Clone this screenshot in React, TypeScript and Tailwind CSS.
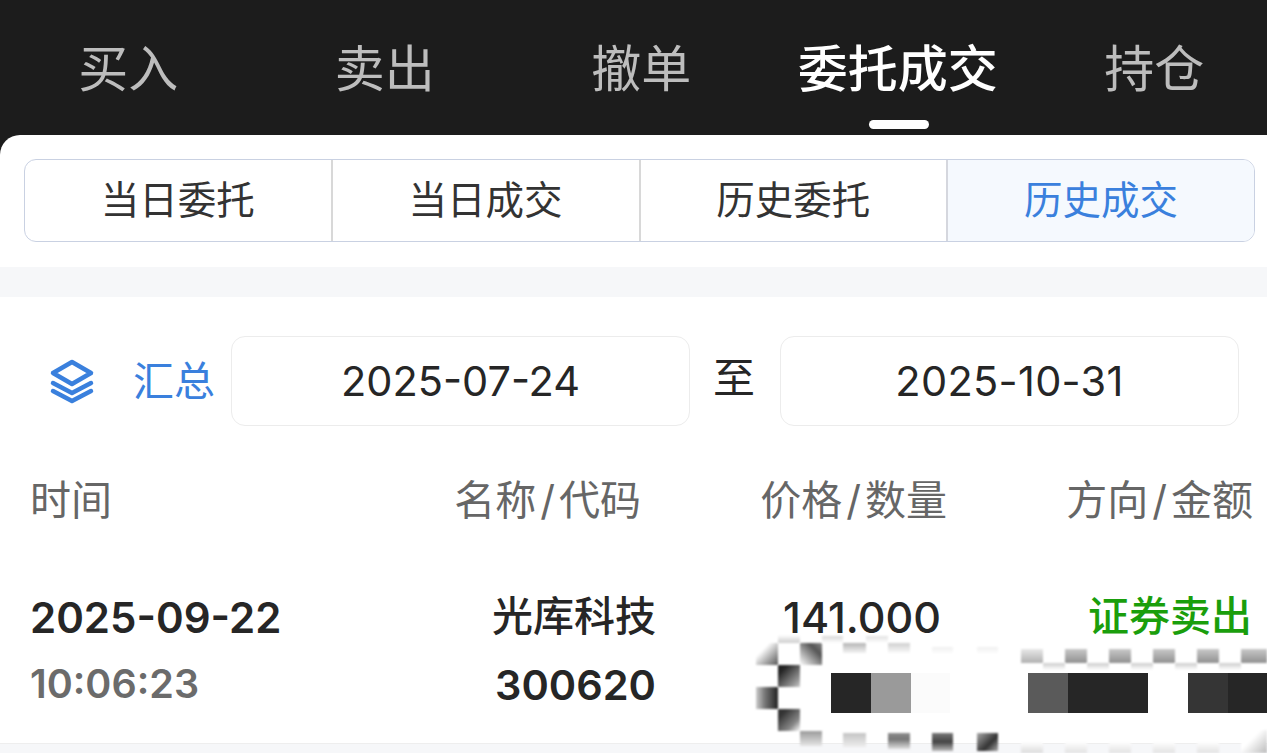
const FONT = "font-['Inter','Noto_Sans_CJK_SC',sans-serif]";

const navItems = [
  { label: "买入", active: false },
  { label: "卖出", active: false },
  { label: "撤单", active: false },
  { label: "委托成交", active: true },
  { label: "持仓", active: false },
];

const subTabs = ["当日委托", "当日成交", "历史委托", "历史成交"];

// solid mosaic cells over the second row: left, width, colour
const mosaicSolid: [number, number, string][] = [
  [831, 40, "#262626"],
  [871, 40, "#9a9a9a"],
  [911, 39, "#fbfbfb"],
  [1028, 40, "#5a5a5a"],
  [1068, 80, "#262626"],
  [1188, 40, "#353535"],
  [1228, 39, "#262626"],
];

// soft mosaic cells: left, top, width, height, gradient
const mosaicSoft: [number, number, number, number, string][] = [
  [756, 643, 22, 22, "linear-gradient(135deg,#ffffff 30%,#555555 100%)"],
  [800, 643, 22, 22, "linear-gradient(45deg,#ffffff 0%,#555555 70%,#888888 100%)"],
  [778, 635, 22, 8, "linear-gradient(0deg,#cccccc,#ffffff)"],
  [822, 636, 21, 7, "linear-gradient(0deg,#ffffff,#d8d8d8)"],
  [843, 643, 23, 10, "linear-gradient(180deg,#b4b4b4,#f4f4f4)"],
  [866, 636, 22, 7, "linear-gradient(0deg,#ffffff,#e2e2e2)"],
  [888, 643, 22, 10, "linear-gradient(180deg,#d0d0d0,#fafafa)"],
  [932, 647, 21, 6, "linear-gradient(180deg,#f0f0f0,#fcfcfc)"],
  [977, 647, 21, 6, "linear-gradient(180deg,#f0f0f0,#fcfcfc)"],
  [778, 665, 22, 22, "linear-gradient(135deg,#222222 20%,#999999 80%,#cccccc 100%)"],
  [756, 687, 22, 22, "linear-gradient(90deg,#cccccc 0%,#777777 40%,#222222 100%)"],
  [778, 709, 22, 22, "linear-gradient(135deg,#333333 20%,#888888 70%,#ffffff 100%)"],
  [800, 731, 22, 15, "linear-gradient(180deg,#9a9a9a,#e6e6e6)"],
  [843, 733, 23, 14, "linear-gradient(180deg,#c4c4c4,#eeeeee)"],
  [888, 733, 22, 16, "linear-gradient(180deg,#8c8c8c,#777777 40%,#e0e0e0)"],
  [932, 733, 21, 18, "linear-gradient(180deg,#777777,#444444 50%,#bbbbbb)"],
  [977, 733, 21, 18, "linear-gradient(135deg,#aaaaaa,#333333 60%,#aaaaaa)"],
  [1021, 649, 22, 14, "linear-gradient(180deg,#e8e8e8,#b0b0b0)"],
  [1065, 649, 22, 14, "linear-gradient(180deg,#c8c8c8,#909090)"],
  [1109, 649, 22, 14, "linear-gradient(180deg,#c8c8c8,#909090)"],
  [1153, 649, 22, 14, "linear-gradient(180deg,#c8c8c8,#909090)"],
  [1197, 649, 22, 14, "linear-gradient(180deg,#c8c8c8,#909090)"],
  [1241, 649, 26, 14, "linear-gradient(180deg,#c8c8c8,#909090)"],
  [1043, 663, 22, 7, "linear-gradient(180deg,#cccccc,#ffffff)"],
  [1087, 663, 22, 7, "linear-gradient(180deg,#cccccc,#ffffff)"],
  [1131, 663, 22, 7, "linear-gradient(180deg,#cccccc,#ffffff)"],
  [1175, 663, 22, 7, "linear-gradient(180deg,#cccccc,#ffffff)"],
  [1219, 663, 22, 7, "linear-gradient(180deg,#cccccc,#ffffff)"],
  [1021, 742, 22, 11, "linear-gradient(180deg,#ffffff,#dcdcdc)"],
  [1065, 742, 22, 11, "linear-gradient(180deg,#ffffff,#e2e2e2)"],
  [1109, 742, 22, 11, "linear-gradient(180deg,#ffffff,#e2e2e2)"],
  [1153, 742, 22, 11, "linear-gradient(180deg,#ffffff,#e2e2e2)"],
  [1197, 742, 22, 11, "linear-gradient(180deg,#ffffff,#e2e2e2)"],
  [1241, 730, 26, 23, "linear-gradient(135deg,#ffffff 40%,#bbbbbb 100%)"],
];

function HeaderLabel({ label, className }: { label: string; className: string }) {
  const [a, b] = label.split("/");
  return (
    <div className={`text-right ${className}`}>
      {a}
      {b !== undefined ? <span className="mx-[4px]">/</span> : null}
      {b}
    </div>
  );
}

export default function App() {
  return (
    <div className={`relative h-[753px] w-[1267px] overflow-hidden bg-[#1c1c1c] ${FONT}`}>
      <nav className="flex h-[135px] items-start">
        {navItems.map((item) => (
          <div key={item.label} className="relative flex h-[135px] w-[256.5px] shrink-0 flex-col items-center pt-[40px]">
            <span
              className={
                item.active
                  ? "text-[50px] leading-[58px] font-medium text-white"
                  : "text-[50px] leading-[58px] font-normal text-[#bdbdbd]"
              }
            >
              {item.label}
            </span>
            {item.active ? (
              <span className="absolute top-[120px] left-[99.5px] h-[9px] w-[60px] rounded-full bg-white" />
            ) : null}
          </div>
        ))}
      </nav>

      <main className="h-[618px] overflow-hidden rounded-tl-[20px] bg-white">
        <div className="pt-[24px] pr-[12px] pb-[25px] pl-[24px]">
          <div className="flex h-[83px] overflow-hidden rounded-[12px] border border-[#c9d1e2]">
            {subTabs.map((tab, i) => (
              <div
                key={tab}
                className={
                  i === 3
                    ? "flex flex-1 items-center justify-center border-l-2 border-[#d5d7de] bg-[#f5f9fe] text-[38.5px] text-[#3a80dd]"
                    : i === 0
                      ? "flex flex-1 items-center justify-center text-[38.5px] text-[#333333]"
                      : "flex flex-1 items-center justify-center border-l-2 border-[#d8d8d8] text-[38.5px] text-[#333333]"
                }
              >
                {tab}
              </div>
            ))}
          </div>
        </div>
        <div className="h-[30px] bg-[#f6f7f9]" />

        <div className="mt-[39px] flex h-[90px] items-center">
          <svg className="ml-[49px] h-[46px] w-[46px]" viewBox="0 0 46 46" fill="none" stroke="#3a80dd" strokeWidth="4.5" strokeLinecap="round" strokeLinejoin="round">
            <path d="M23 4 L42 15 L23 26 L4 15 Z" />
            <path d="M4 25 L23 35 L42 25" />
            <path d="M4 33 L23 43 L42 33" />
          </svg>
          <span className="ml-[38px] text-[41px] leading-none text-[#3a80dd]">汇总</span>
          <div className="ml-[16px] flex h-[90px] w-[459px] items-center justify-center rounded-[14px] border border-[#ececec] text-[41.5px] text-[#262626]">
            2025-07-24
          </div>
          <span className="-mt-[6px] w-[90px] pr-[2px] text-center text-[42px] leading-none text-[#262626]">至</span>
          <div className="flex h-[90px] w-[459px] items-center justify-center rounded-[14px] border border-[#ececec] text-[41.5px] tracking-[0.3px] text-[#262626]">
            2025-10-31
          </div>
        </div>

        <div className="mt-[45px] flex h-[60px] items-center text-[41px] text-[#666666]">
          <div className="ml-[30px] w-[300px]">时间</div>
          <HeaderLabel label="名称/代码" className="w-[311px]" />
          <HeaderLabel label="价格/数量" className="w-[306px]" />
          <HeaderLabel label="方向/金额" className="w-[306px]" />
        </div>

        <div className="mt-[52px] flex h-[68px] items-center font-semibold text-[#262626]">
          <div className="ml-[30px] w-[300px] text-[42px]">2025-09-22</div>
          <div className="w-[326px] text-right text-[41px] font-medium">光库科技</div>
          <div className="w-[285px] text-right text-[43px] font-medium">141.000</div>
          <div className="w-[311px] text-right text-[41px] font-medium text-[#1a9e0c]">证券卖出</div>
        </div>
        <div className="flex h-[68px] items-center font-semibold text-[#262626]">
          <div className="ml-[30px] w-[300px] text-[39.5px] text-[#6b6b6b]">10:06:23</div>
          <div className="w-[326px] text-right text-[41.5px]">300620</div>
        </div>
        <div className="mt-[24px] h-px bg-[#eeeeee]" />
        <div className="h-[20px] bg-[#f6f7f9]" />
      </main>

      {mosaicSoft.map(([x, y, w, h, bg]) => (
        <span key={`${x}-${y}`} className="absolute blur-[1px]" style={{ left: x, top: y, width: w, height: h, background: bg }} />
      ))}
      {mosaicSolid.map(([x, w, c]) => (
        <span key={x} className="absolute top-[673px] h-[40px]" style={{ left: x, width: w, backgroundColor: c }} />
      ))}
    </div>
  );
}
